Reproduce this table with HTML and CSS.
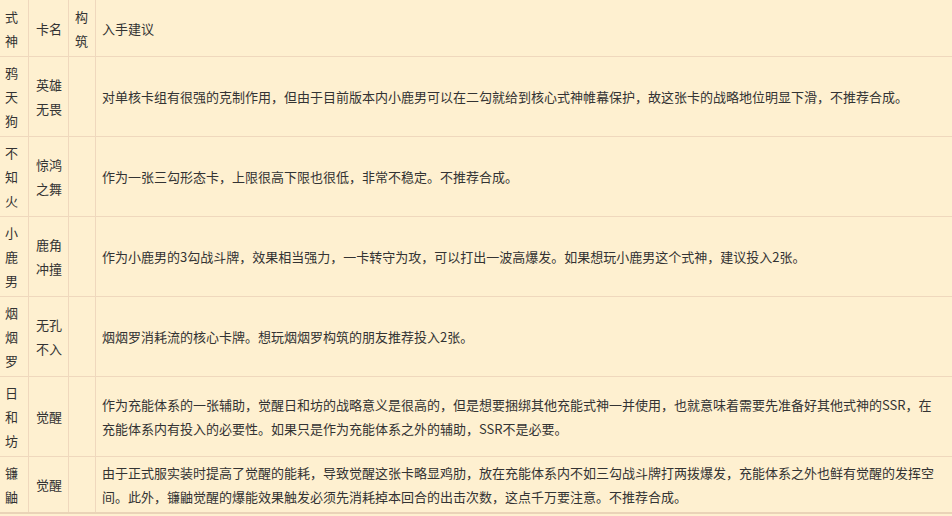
FILE: index.html
```html
<!DOCTYPE html>
<html lang="zh">
<head>
    <meta charset="UTF-8">
    <title>卡牌推荐</title>
    <link rel="stylesheet" href="styles.css">
</head>
<body>

    <!-- 卡牌入手建议 -->
    <table class="cards">
        <tr class="head">
            <td class="c-shi">式神</td>
            <td class="c-name">卡名</td>
            <td class="c-build">构筑</td>
            <td class="c-tip">入手建议</td>
        </tr>
        <tr>
            <td class="c-shi">鸦天狗</td>
            <td class="c-name">英雄无畏</td>
            <td class="c-build"></td>
            <td class="c-tip">对单核卡组有很强的克制作用，但由于目前版本内小鹿男可以在二勾就给到核心式神帷幕保护，故这张卡的战略地位明显下滑，不推荐合成。</td>
        </tr>
        <tr>
            <td class="c-shi">不知火</td>
            <td class="c-name">惊鸿之舞</td>
            <td class="c-build"></td>
            <td class="c-tip">作为一张三勾形态卡，上限很高下限也很低，非常不稳定。不推荐合成。</td>
        </tr>
        <tr>
            <td class="c-shi">小鹿男</td>
            <td class="c-name">鹿角冲撞</td>
            <td class="c-build"></td>
            <td class="c-tip">作为小鹿男的3勾战斗牌，效果相当强力，一卡转守为攻，可以打出一波高爆发。如果想玩小鹿男这个式神，建议投入2张。</td>
        </tr>
        <tr>
            <td class="c-shi">烟烟罗</td>
            <td class="c-name">无孔不入</td>
            <td class="c-build"></td>
            <td class="c-tip">烟烟罗消耗流的核心卡牌。想玩烟烟罗构筑的朋友推荐投入2张。</td>
        </tr>
        <tr>
            <td class="c-shi">日和坊</td>
            <td class="c-name">觉醒</td>
            <td class="c-build"></td>
            <td class="c-tip">作为充能体系的一张辅助，觉醒日和坊的战略意义是很高的，但是想要捆绑其他充能式神一并使用，也就意味着需要先准备好其他式神的SSR，在充能体系内有投入的必要性。如果只是作为充能体系之外的辅助，SSR不是必要。</td>
        </tr>
        <tr class="last">
            <td class="c-shi">镰鼬</td>
            <td class="c-name">觉醒</td>
            <td class="c-build"></td>
            <td class="c-tip">由于正式服实装时提高了觉醒的能耗，导致觉醒这张卡略显鸡肋，放在充能体系内不如三勾战斗牌打两拨爆发，充能体系之外也鲜有觉醒的发挥空间。此外，镰鼬觉醒的爆能效果触发必须先消耗掉本回合的出击次数，这点千万要注意。不推荐合成。</td>
        </tr>
    </table>

</body>
</html>
```

FILE: styles.css
```css
body { margin: 0; background-color: #fef0d0; font-family: "Noto Sans CJK SC", "Liberation Sans", sans-serif; font-size: 13px; color: #333; overflow: hidden; }
.cards { border-collapse: collapse; width: 953px; table-layout: fixed; background-color: #fef0d0; }
.cards td { border: 1px solid #efd8bd; line-height: 24px; padding: 4px 6px 3px 6px; vertical-align: middle; text-align: left; }
.cards tr:first-child td { border-top: none; }
.cards td:first-child { border-left: none; }
.cards td:last-child { border-right: none; }
.c-shi { width: 17px; padding-left: 5px !important; padding-right: 6px !important; }
.c-name { width: 26px; padding-left: 7px !important; }
.c-build { width: 14px; padding-left: 6px !important; }
.c-tip { padding-right: 14px !important; }
.head td { padding-top: 5px; padding-bottom: 3px; }
.last td { border-bottom: 2px solid #ead3b8; }
```
